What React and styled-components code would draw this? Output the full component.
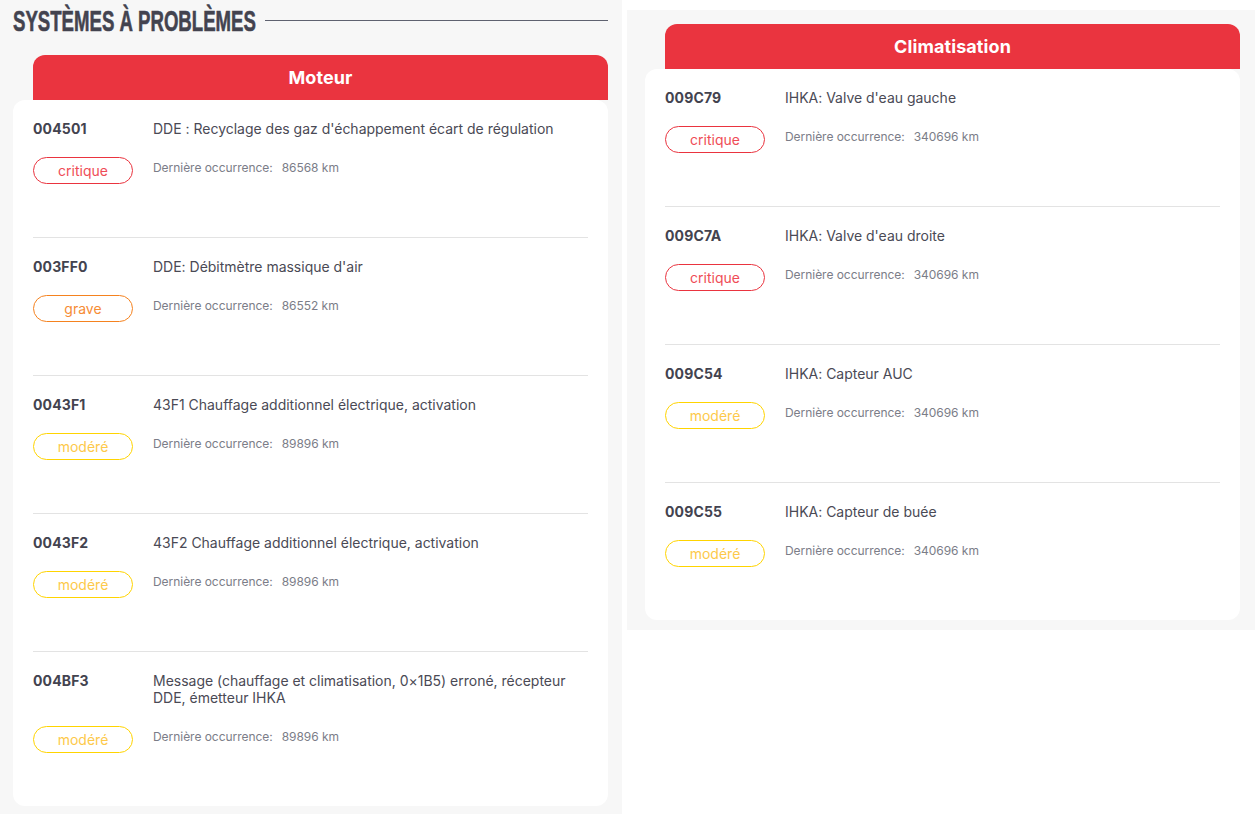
import React from 'react';
import styled, { createGlobalStyle } from 'styled-components';

const GlobalStyle = createGlobalStyle`
  html, body {
    margin: 0;
    padding: 0;
    background: #fff;
    font-family: 'Inter', 'Liberation Sans', sans-serif;
  }
`;

const SEVERITY_COLORS = {
  critique: '#ea343f',
  grave: '#f5821f',
  'modéré': '#ffd400',
};

const SEVERITY_TEXT = {
  critique: '#ef4d57',
  grave: '#f68c35',
  'modéré': '#fdc94a',
};

const Page = styled.div`
  display: flex;
  align-items: flex-start;
  gap: 5px;
  width: 1255px;
  height: 814px;
  overflow: hidden;
`;

const LeftColumn = styled.section`
  width: 622px;
  height: 814px;
  box-sizing: border-box;
  background: #f7f7f7;
  padding: 0 14px 8px 13px;
`;

const RightColumn = styled.section`
  width: 628px;
  margin-top: 10px;
  box-sizing: border-box;
  background: #f7f7f7;
  padding: 14px 15px 10px 18px;
`;

const Heading = styled.div`
  display: flex;
  align-items: center;
  gap: 10px;
  height: 55px;
  padding-bottom: 14px;
  box-sizing: border-box;
`;

const HeadingBox = styled.div`
  width: 242px;
  flex: none;
`;

/* no condensed display font here, so the bold sans is squeezed to the same width */
const HeadingText = styled.h2`
  display: inline-block;
  margin: 0;
  font-family: 'Liberation Sans', sans-serif;
  font-size: 30px;
  font-weight: 700;
  line-height: 41px;
  color: #43434f;
  -webkit-text-stroke: 0.6px #43434f;
  white-space: nowrap;
  transform: scaleX(0.62);
  transform-origin: left center;
`;

const HeadingRule = styled.div`
  flex: 1;
  height: 1px;
  background: #5f6270;
`;

const Tab = styled.div`
  margin-left: 20px;
  height: 45px;
  border-radius: 12px 12px 0 0;
  background: #ea343f;
  color: #fff;
  font-size: 18px;
  font-weight: 700;
  letter-spacing: 0.1px;
  line-height: 45px;
  text-align: center;
`;

const Card = styled.div`
  background: #fff;
  border-radius: 12px;
  padding: 0 20px;
`;

const Row = styled.div`
  display: grid;
  grid-template-columns: 120px 1fr;
  row-gap: 20px;
  padding: 20px 0 53px;

  & + & {
    border-top: 1px solid #e3e3e3;
  }
`;

const Code = styled.div`
  font-size: 14px;
  font-weight: 700;
  letter-spacing: 0.15px;
  line-height: 17px;
  color: #43434f;
`;

const Description = styled.div`
  font-size: 14px;
  letter-spacing: -0.01px;
  line-height: 17px;
  color: #4a4a55;
`;

const Badge = styled.div`
  width: 100px;
  height: 27px;
  box-sizing: border-box;
  border: 1px solid ${(p) => SEVERITY_COLORS[p.$level]};
  border-radius: 14px;
  color: ${(p) => SEVERITY_TEXT[p.$level]};
  font-size: 14px;
  line-height: 25px;
  text-align: center;
`;

const Meta = styled.div`
  display: flex;
  gap: 9px;
  padding-top: 2px;
  font-size: 12px;
  letter-spacing: -0.04px;
  line-height: 18px;
  color: #7b7d88;
`;

const Problem = ({ code, text, level, km }) => (
  <Row>
    <Code>{code}</Code>
    <Description>{text}</Description>
    <Badge $level={level}>{level}</Badge>
    <Meta>
      <span>Dernière occurrence:</span>
      <span>{km} km</span>
    </Meta>
  </Row>
);

const moteur = [
  { code: '004501', text: "DDE : Recyclage des gaz d'échappement écart de régulation", level: 'critique', km: 86568 },
  { code: '003FF0', text: "DDE: Débitmètre massique d'air", level: 'grave', km: 86552 },
  { code: '0043F1', text: '43F1 Chauffage additionnel électrique, activation', level: 'modéré', km: 89896 },
  { code: '0043F2', text: '43F2 Chauffage additionnel électrique, activation', level: 'modéré', km: 89896 },
  { code: '004BF3', text: 'Message (chauffage et climatisation, 0×1B5) erroné, récepteur DDE, émetteur IHKA', level: 'modéré', km: 89896 },
];

const climatisation = [
  { code: '009C79', text: "IHKA: Valve d'eau gauche", level: 'critique', km: 340696 },
  { code: '009C7A', text: "IHKA: Valve d'eau droite", level: 'critique', km: 340696 },
  { code: '009C54', text: 'IHKA: Capteur AUC', level: 'modéré', km: 340696 },
  { code: '009C55', text: 'IHKA: Capteur de buée', level: 'modéré', km: 340696 },
];

const App = () => (
  <>
    <GlobalStyle />
    <Page>
      <LeftColumn>
        <Heading>
          <HeadingBox>
            <HeadingText>SYSTÈMES À PROBLÈMES</HeadingText>
          </HeadingBox>
          <HeadingRule />
        </Heading>
        <Tab>Moteur</Tab>
        <Card>
          {moteur.map((item) => (
            <Problem key={item.code} {...item} />
          ))}
        </Card>
      </LeftColumn>
      <RightColumn>
        <Tab>Climatisation</Tab>
        <Card>
          {climatisation.map((item) => (
            <Problem key={item.code} {...item} />
          ))}
        </Card>
      </RightColumn>
    </Page>
  </>
);

export default App;
